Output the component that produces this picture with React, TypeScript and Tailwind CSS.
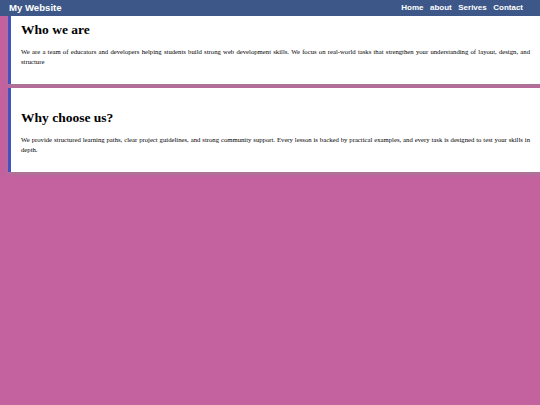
import React from "react";

const cards = [
  {
    title: "Who we are",
    text: "We are a team of educators and developers helping students build strong web development skills. We focus on real-world tasks that strengthen your understanding of layout, design, and structure",
  },
  {
    title: "Why choose us?",
    text: "We provide structured learning paths, clear project guidelines, and strong community support. Every lesson is backed by practical examples, and every task is designed to test your skills in depth.",
  },
];

export default function App() {
  return (
    <div className="min-h-[405px] w-[540px] overflow-hidden bg-[#c462a0]">
      <header className="fixed left-0 right-0 top-0 z-10 flex h-[16px] items-center justify-between bg-[#3d5888] pl-[9px] pr-[17px] font-['Liberation_Sans',Arial,sans-serif] font-bold text-white">
        <span className="text-[9.6px] leading-none">My Website</span>
        <nav className="flex gap-[6.5px] text-[8px] leading-none">
          <span>Home</span>
          <span>about</span>
          <span>Serives</span>
          <span>Contact</span>
        </nav>
      </header>
      <main className="flex flex-col gap-[4px] pl-[8px] font-['Liberation_Serif','Times_New_Roman',serif] text-black">
        {cards.map((c) => (
          <section
            key={c.title}
            className="h-[84px] border-l-[3px] border-[#4452c0] bg-white pb-[17px] pl-[10px] pr-[10px] pt-[22px] shadow-[0_2px_4px_rgba(140,140,140,0.6)]"
          >
            <h2 className="mb-[9.5px] text-[13.5px] font-bold leading-[15.5px]">{c.title}</h2>
            <p className="text-justify text-[6.7px] leading-[10px]">{c.text}</p>
          </section>
        ))}
      </main>
    </div>
  );
}
